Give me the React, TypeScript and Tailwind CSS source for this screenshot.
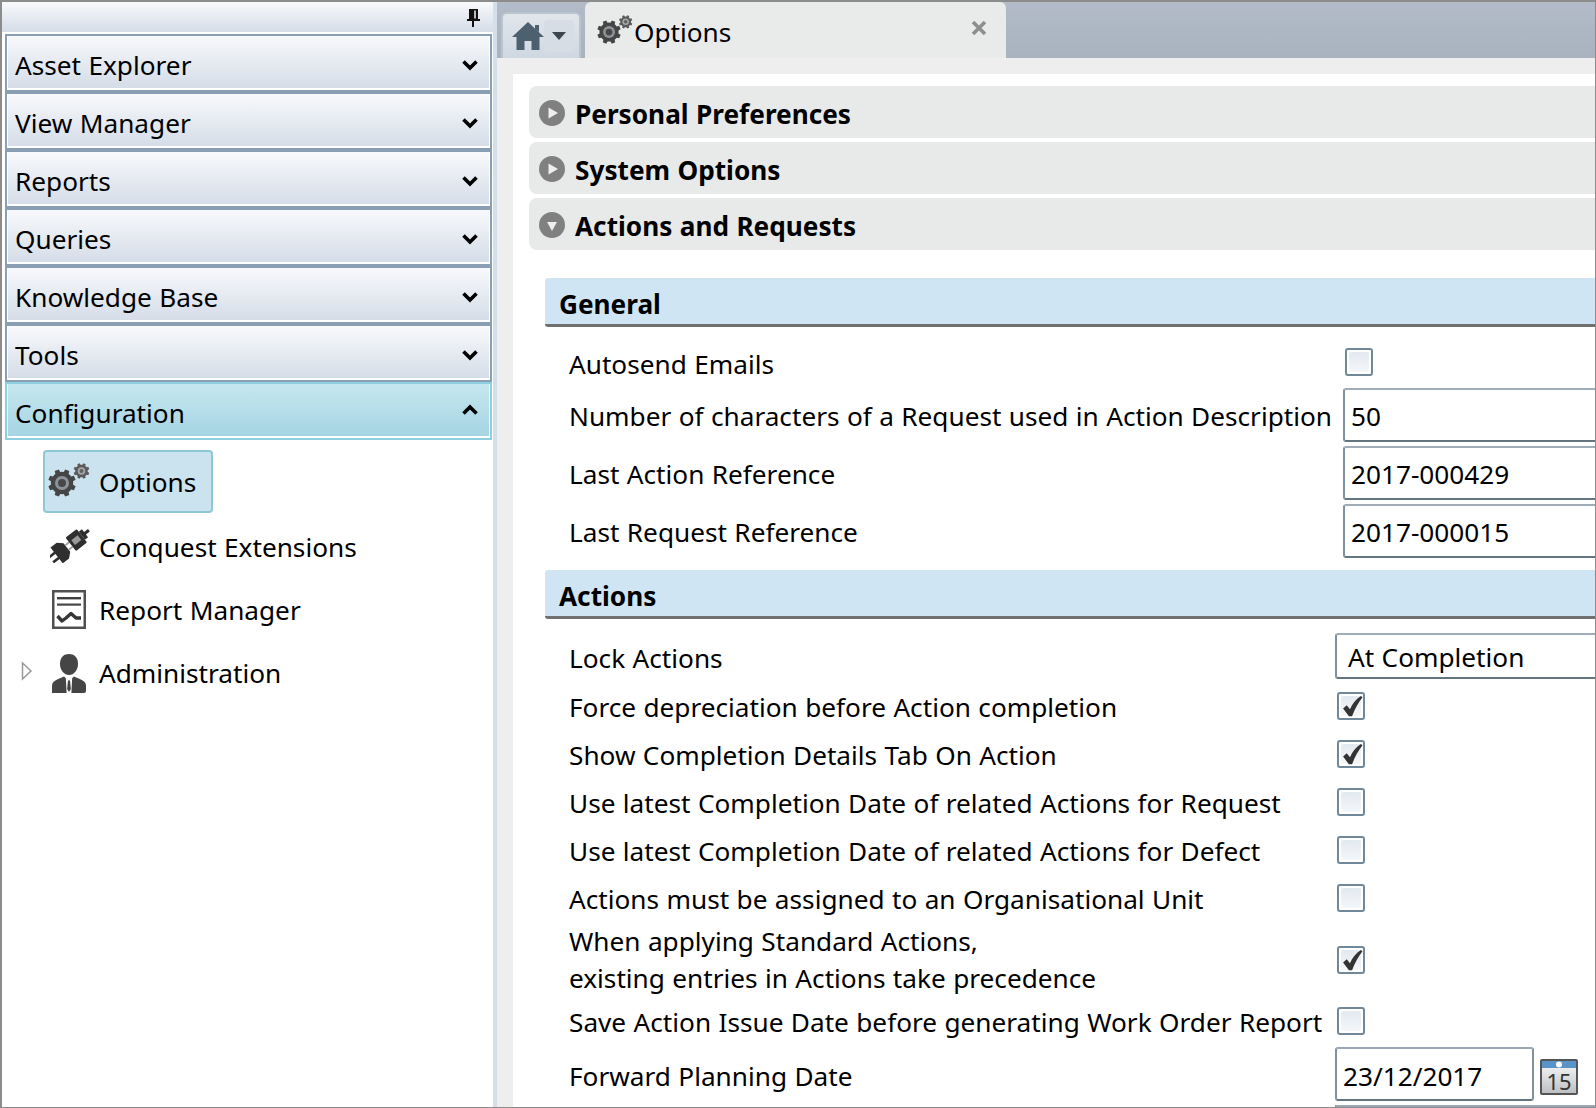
import { ReactNode } from "react";

// toothed gear outline, teeth at even angles around (cx, cy)
const gearPath = (cx: number, cy: number, outer: number, inner: number, teeth: number) => {
  const pts: string[] = [];
  const step = (Math.PI * 2) / teeth;
  for (let i = 0; i < teeth; i++) {
    const a = i * step + step / 2;
    [
      [inner, a - step * 0.5],
      [inner, a - step * 0.3],
      [outer, a - step * 0.2],
      [outer, a + step * 0.2],
      [inner, a + step * 0.3],
    ].forEach(([r, t]) => {
      pts.push(`${(cx + r * Math.cos(t)).toFixed(2)} ${(cy + r * Math.sin(t)).toFixed(2)}`);
    });
  }
  return `M${pts.join("L")}Z`;
};

const GearsIcon = ({ className }: { className: string }) => (
  <svg viewBox="0 0 42 34" className={className}>
    <path d={gearPath(14, 20, 14, 11.2, 8)} fill="#454545" />
    <circle cx="14" cy="20" r="7" fill="#8c9498" />
    <circle cx="14" cy="20" r="4" fill="#484848" />
    <path d={gearPath(33.5, 8, 8, 6.3, 8)} fill="#5a5a5a" />
    <circle cx="33.5" cy="8" r="3.8" fill="#a2a8ab" />
    <circle cx="33.5" cy="8" r="2" fill="#606060" />
  </svg>
);

const PlugIcon = () => (
  <svg viewBox="0 0 40 36" className="w-[40px] h-[36px]">
    <g transform="translate(20 18) rotate(-38)" fill="#2f2f2f">
      <rect x="-24" y="-4.5" width="8" height="2.6" />
      <rect x="-24" y="2" width="8" height="2.6" />
      <path d="M-17 -10 H-9 L-4 -5.5 V5.5 L-9 10 H-17Z" />
      <rect x="-4" y="-3.6" width="5" height="1.8" fill="#a0a0a0" />
      <rect x="-4" y="2" width="5" height="1.8" fill="#a0a0a0" />
      <rect x="1" y="-8.5" width="14" height="17" rx="1" />
      <rect x="4" y="-3" width="8" height="6" fill="#9a9a9a" />
      <path d="M15 -5 H19 V-1.5 H24 V1.5 H19 V5 H15Z" />
    </g>
  </svg>
);

const ReportIcon = () => (
  <svg viewBox="0 0 34 39" className="w-[34px] h-[39px] mt-[4px] ml-[2px]">
    <rect x="1.25" y="1.25" width="31.5" height="36.5" fill="#fff" stroke="#505050" strokeWidth="2.5" />
    <rect x="5" y="7" width="24" height="2.4" fill="#404040" />
    <rect x="5" y="13.5" width="24" height="2.2" fill="#484848" />
    <path
      d="M5.5 26 L10 31 L14 28 L19 23.5 L24 28 L29 28"
      fill="none"
      stroke="#363636"
      strokeWidth="3.4"
      strokeLinejoin="round"
    />
  </svg>
);

const PersonIcon = () => (
  <svg viewBox="0 0 34 39" className="w-[34px] h-[39px] mt-[6px] ml-[2px]">
    <path d="M8 10 C8 3 12 0 17 0 C22 0 26 3 26 10 C26 16 22 21 17 21 C12 21 8 16 8 10Z" fill="#454545" />
    <path d="M0 39 V32 C0 27 4 26 12 22.5 L17 27 L22 22.5 C30 26 34 27 34 32 V37 Q34 39 32 39Z" fill="#454545" />
    <path d="M13.8 23.5 L17 27 L20.2 23.5 L19.4 39 H14.6Z" fill="#fff" />
    <path d="M16 26.5 h2 l0.9 8.5 -1.9 3 -1.9 -3z" fill="#454545" />
  </svg>
);

const Chevron = ({ up }: { up?: boolean }) => (
  <svg viewBox="0 0 16 11" className={`w-[16px] h-[11px] ${up ? "" : "mt-[9px]"}`}>
    <path d={up ? "M1.5 9.5 L8 3 L14.5 9.5" : "M1.5 1.5 L8 8 L14.5 1.5"} fill="none" stroke="#000" strokeWidth="3.6" />
  </svg>
);

const Check = () => (
  <svg viewBox="0 0 22 22" className="absolute left-[2px] top-[1px] w-[23px] h-[23px]">
    <path d="M2 13 L5.5 9.8 L8.6 13.6 C10.6 8.6 14 4.4 19 1 L20.6 2.2 C16.4 7.5 13.4 13 10.6 20.4 H7.6 Z" fill="#333" />
  </svg>
);

const Checkbox = ({ checked }: { checked?: boolean }) => (
  <div className="relative w-[28px] h-[28px] rounded-[3px] border-2 border-[#71889a] bg-white p-[2px]">
    <div className="w-full h-full rounded-[2px] bg-gradient-to-b from-[#e3e9f0] to-[#f5f7fa]" />
    {checked && <Check />}
  </div>
);

const TextBox = ({ value, className }: { value: string; className: string }) => (
  <div
    className={`flex items-center bg-white border-2 border-r-0 border-t-[#a0adb9] border-l-[#7f909e] border-b-[#64757f] rounded-l-[3px] pt-[3px] ${className}`}
  >
    {value}
  </div>
);

const NavHeader = ({ label, active }: { label: string; active?: boolean }) => (
  <div className={`h-[58px] border-2 ${active ? "border-[#8ccfde]" : "border-[#8a9fb3]"}`}>
    <div
      className={`h-full flex items-center justify-between pl-[7px] pr-[11px] pb-[2px] border-x border-b-2 border-white bg-gradient-to-b ${
        active ? "from-[#c5e7ef] to-[#a6d4e3]" : "from-[#f8f9fb] to-[#d5dde8]"
      }`}
    >
      <span className="pt-[10px]">{label}</span>
      <Chevron up={active} />
    </div>
  </div>
);

const SubItem = ({ icon, label }: { icon: ReactNode; label: string }) => (
  <div className="flex items-center h-[63px]">
    <div className="w-[56px] pl-[7px] flex justify-start shrink-0">{icon}</div>
    <span className="pt-[6px]">{label}</span>
  </div>
);

const PanelHeader = ({ label, open }: { label: string; open?: boolean }) => (
  <div className="h-[52px] flex items-center gap-[10px] pl-[10px] pt-[1px] rounded-l-[8px] bg-[#e8eaea] font-bold">
    <svg viewBox="0 0 26 26" className="w-[26px] h-[26px]">
      <circle cx="13" cy="13" r="13" fill="#808080" />
      <path d={open ? "M8 10 H18 L13 19Z" : "M9.5 7.5 L19 13 L9.5 18.5Z"} fill="#eee" />
    </svg>
    <span className="pt-[5px]">{label}</span>
  </div>
);

const SectionHeader = ({ label }: { label: string }) => (
  <div className="h-[49px] flex items-center pl-[14px] pt-[7px] rounded-l-[3px] bg-[#d0e5f3] border-b-[3px] border-[#707070] font-bold">
    {label}
  </div>
);

const CheckRow = ({ label, checked }: { label: ReactNode; checked?: boolean }) => (
  <div className="flex items-center h-[48px]">
    <div className="w-[768px] shrink-0 pt-[4px]">{label}</div>
    <Checkbox checked={checked} />
  </div>
);

const Sidebar = () => (
  <aside className="w-[491px] shrink-0 flex flex-col bg-white">
    <div className="h-[30px] flex justify-end items-start pr-[13px] pt-[7px] bg-gradient-to-b from-[#f8f9fb] to-[#d5dde8]">
      <svg viewBox="0 0 14 18" className="w-[14px] h-[18px]">
        <path d="M3 0 H12 V10 H14 V12 H8 V18 H6 V12 H1 V10 H3Z" fill="#111" />
        <rect x="8" y="1.5" width="2" height="8" fill="#bbb" />
      </svg>
    </div>
    <div className="flex flex-col pt-[2px] pl-[3px] pr-[1px]">
      {["Asset Explorer", "View Manager", "Reports", "Queries", "Knowledge Base", "Tools"].map((l) => (
        <NavHeader key={l} label={l} />
      ))}
      <NavHeader label="Configuration" active />
    </div>
    <div className="flex flex-col pt-[10px]">
      <div className="flex items-center h-[63px] ml-[41px] mr-auto w-[170px] rounded-[4px] border-2 border-[#8ec8d8] bg-[#cbe3ee]">
        <GearsIcon className="w-[42px] h-[34px] ml-[3px] mr-[9px] -mt-[4px]" />
        <span className="pt-[2px]">Options</span>
      </div>
      <div className="pl-[41px]">
        <SubItem icon={<PlugIcon />} label="Conquest Extensions" />
        <SubItem icon={<ReportIcon />} label="Report Manager" />
      </div>
      <div className="flex items-center">
        <svg viewBox="0 0 12 20" className="w-[12px] h-[20px] ml-[19px] mr-[10px]">
          <path d="M1.5 2 L10 10 L1.5 18Z" fill="#fff" stroke="#999" strokeWidth="1.5" />
        </svg>
        <SubItem icon={<PersonIcon />} label="Administration" />
      </div>
    </div>
  </aside>
);

export default function App() {
  return (
    <div
      className="w-[1596px] h-[1108px] overflow-hidden flex border-2 border-r border-b border-[#8c8c8c] bg-white text-black text-[26.2px] [word-spacing:0.6px]"
      style={{ fontFamily: '"Noto Sans", sans-serif' }}
    >
      <Sidebar />
      <div className="w-[4px] shrink-0 bg-[#d4dfec]" />
      <main className="flex-1 min-w-0 flex flex-col">
        <div className="h-[56px] shrink-0 flex items-end pl-[4px] gap-[4px] bg-gradient-to-b from-[#b2bbc7] to-[#a8b3bf]">
          <div className="w-[80px] h-[46px] flex items-center pl-[9px] rounded-t-[6px] border-2 border-b-0 border-[#b9c4cf] bg-gradient-to-b from-[#e1e6eb] to-[#cfd8e2]">
            <svg viewBox="0 0 32 28" className="w-[32px] h-[28px]">
              <path d="M16 0 L32 15 H27.5 V28 H19.5 V19 H12.5 V28 H4.5 V15 H0 L16 0Z M23 3 H27 V10 L23 6.5Z" fill="#4d6070" />
            </svg>
            <div className="flex items-center justify-center w-[30px] h-[32px] rounded-[4px] bg-[#d6dde4]">
              <svg viewBox="0 0 14 8" className="w-[14px] h-[8px]">
                <path d="M0 0 H14 L7 8Z" fill="#3c4650" />
              </svg>
            </div>
          </div>
          <div className="w-[421px] h-[56px] flex items-center pl-[12px] rounded-t-[6px] bg-[#e9ebeb]">
            <GearsIcon className="w-[36px] h-[29px] mr-[1px] -mt-[2px]" />
            <span className="pt-[6px]">Options</span>
            <svg viewBox="0 0 16 16" className="w-[16px] h-[16px] ml-auto mr-[19px] -mt-[5px]">
              <path d="M2 2 L14 14 M14 2 L2 14" stroke="#8e8e8e" strokeWidth="3.6" />
            </svg>
          </div>
        </div>
        <div className="flex-1 min-h-0 pl-[16px] pt-[16px] bg-[#eeeeee]">
          <div className="h-full bg-white pl-[16px] pt-[12px] overflow-hidden">
            <div className="flex flex-col gap-[4px]">
              <PanelHeader label="Personal Preferences" />
              <PanelHeader label="System Options" />
              <PanelHeader label="Actions and Requests" open />
            </div>
            <div className="pl-[16px] pt-[28px]">
              <SectionHeader label="General" />
              <div className="pl-[24px]">
                <div className="flex items-center h-[61px] pt-[8px]">
                  <div className="w-[776px] shrink-0 pt-[7px]">Autosend Emails</div>
                  <Checkbox />
                </div>
                <div className="flex flex-col gap-[4px] pb-[12px]">
                  {[
                    ["Number of characters of a Request used in Action Description", "50"],
                    ["Last Action Reference", "2017-000429"],
                    ["Last Request Reference", "2017-000015"],
                  ].map(([label, value]) => (
                    <div key={label} className="flex items-center h-[54px]">
                      <div className="w-[774px] shrink-0 pt-[3px]">{label}</div>
                      <TextBox value={value} className="flex-1 h-full pl-[6px]" />
                    </div>
                  ))}
                </div>
              </div>
              <SectionHeader label="Actions" />
              <div className="pl-[24px]">
                <div className="flex items-center h-[60px] pt-[14px]">
                  <div className="w-[766px] shrink-0 pt-[5px]">Lock Actions</div>
                  <TextBox value="At Completion" className="flex-1 h-[46px] pl-[11px]" />
                </div>
                <div className="pt-[3px]">
                  <CheckRow label="Force depreciation before Action completion" checked />
                  <CheckRow label="Show Completion Details Tab On Action" checked />
                  <CheckRow label="Use latest Completion Date of related Actions for Request" />
                  <CheckRow label="Use latest Completion Date of related Actions for Defect" />
                  <CheckRow label="Actions must be assigned to an Organisational Unit" />
                </div>
                <div className="flex items-center h-[75px]">
                  <div className="w-[768px] shrink-0 leading-[37px]">
                    When applying Standard Actions,
                    <br />
                    existing entries in Actions take precedence
                  </div>
                  <Checkbox checked />
                </div>
                <CheckRow label="Save Action Issue Date before generating Work Order Report" />
                <div className="flex items-center h-[54px] mt-[2px]">
                  <div className="w-[766px] shrink-0 pt-[6px]">Forward Planning Date</div>
                  <div className="w-[199px] h-full flex items-center pl-[6px] pt-[5px] bg-white border-2 border-t-[#9aa8b5] border-l-[#7f909e] border-r-[#7f909e] border-b-[#64757f] rounded-[3px]">
                    23/12/2017
                  </div>
                  <svg viewBox="0 0 38 36" className="w-[38px] h-[36px] ml-[6px] mt-[6px]">
                    <defs>
                      <linearGradient id="calBody" x1="0" y1="0" x2="0" y2="1">
                        <stop offset="0" stopColor="#fbfbfb" />
                        <stop offset="1" stopColor="#bcbfc2" />
                      </linearGradient>
                    </defs>
                    <rect x="1" y="1" width="36" height="34" rx="1" fill="url(#calBody)" stroke="#555" strokeWidth="2" />
                    <rect x="2" y="2" width="34" height="7" fill="#5a93c8" />
                    <circle cx="19" cy="5.5" r="3" fill="#fff" />
                    <text x="19" y="31" textAnchor="middle" fontSize="22" fill="#333">
                      15
                    </text>
                  </svg>
                </div>
                <div className="ml-[766px] mt-[4px] h-[40px] bg-white border-2 border-r-0 border-t-[#9aa8b5] border-l-[#7f909e]" />
              </div>
            </div>
          </div>
        </div>
      </main>
    </div>
  );
}
